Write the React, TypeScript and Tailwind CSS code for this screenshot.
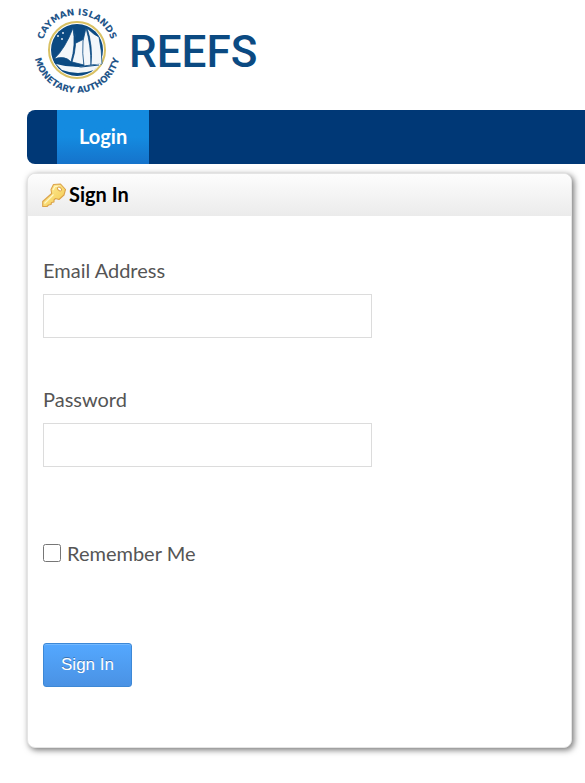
import { useState } from 'react'

function Seal() {
  return (
    <svg viewBox="0 0 92 92" className="w-[92px] h-[92px] shrink-0" role="img" aria-label="Cayman Islands Monetary Authority">
      <defs>
        <path id="seal-top" d="M10 47a36 36 0 0 1 72 0" />
        <path id="seal-bottom" d="M3 46a43 43 0 0 0 86 0" />
      </defs>
      <circle cx="46" cy="46" r="28" fill="#fff" stroke="#d9c163" strokeWidth="2" />
      <circle cx="46" cy="46" r="26" fill="#0b4a82" />
      {/* stars */}
      <g fill="#dfe9f2">
        <circle cx="32" cy="29" r="1" />
        <circle cx="27" cy="32" r="1" />
        <circle cx="31" cy="35" r="1" />
      </g>
      {/* schooner */}
      <g fill="#f3f7fa" stroke="#0b4a82" strokeWidth="0.8">
        <path d="M42 24Q34 45 23 55q11-4 17 3 5-17 2-34Z" />
        <path d="M43 24q4 16-2 34l12 3q2-14 0-26l-8 4Z" />
        <path d="M55 24l-3 13q-1 12 1 25l7-1q0-20-5-37Z" />
        <path d="M56 24q6 18 4 37l11-1q0-13-3-27-5-2-12-9Z" />
      </g>
      <path d="M25 60q20 6 46-1l-8 7q-16 6-32 0Z" fill="#f3f7fa" />
      <path d="M23 58l17 3 10 2 18-2" fill="none" stroke="#0b4a82" strokeWidth="1.200" />
      <g fill="#1f5589" fontFamily="DejaVu Sans, sans-serif" fontWeight="bold" fontSize="9" textAnchor="middle">
        <text><textPath href="#seal-top" startOffset="50%">CAYMAN ISLANDS</textPath></text>
        <text><textPath href="#seal-bottom" startOffset="50%">MONETARY AUTHORITY</textPath></text>
      </g>
    </svg>
  )
}

function KeyIcon() {
  return (
    <svg viewBox="0 0 24 24" className="w-6 h-6 shrink-0" aria-hidden="true">
      <defs>
        <linearGradient id="key-gold" x1="0" y1="0" x2="1" y2="1">
          <stop offset="0" stopColor="#fff0a0" />
          <stop offset="1" stopColor="#f3c74a" />
        </linearGradient>
      </defs>
      <path
        d="M11.500 1.500 18.500 1 23.500 6.500 22 12 17 16.500 13.500 15.500 12 17V19L9.500 19.500 9 21.500 6.500 22 5 23.500H.7V18.500L9.700 10.500 9 6.500Z"
        fill="url(#key-gold)" stroke="#dba24a" strokeWidth="1.100" strokeLinejoin="round"
      />
      <path d="m2.500 20.500 9-9M11 7l2-3.500 5-.5" fill="none" stroke="#fff7c8" strokeWidth="1.200" />
      <ellipse cx="17.500" cy="6" rx="2.300" ry="1.600" transform="rotate(40 17.500 6)" fill="#fff" stroke="#dba24a" />
    </svg>
  )
}

function Field({ id, label, type, value, onChange }: {
  id: string; label: string; type: string
  value: string; onChange: (value: string) => void
}) {
  return (
    <div>
      <label htmlFor={id} className="block text-xl leading-6">{label}</label>
      <input
        id={id} type={type} value={value} onChange={e => onChange(e.target.value)}
        className="block mt-3 w-[329px] max-w-full h-11 px-3 border border-[#dcdcdc] bg-white focus:outline-none focus:border-[#4d9ff5]"
      />
    </div>
  )
}

export default function App() {
  const [email, setEmail] = useState('')
  const [password, setPassword] = useState('')
  const [remember, setRemember] = useState(false)

  return (
    <div className="bg-white pl-[27px] pb-9 font-[Lato,sans-serif] text-[#555]">
      <header className="flex items-center pt-1 pl-1">
        <Seal />
        <span className="ml-[6px] pt-1 text-[44px] leading-none font-medium font-[Roboto,sans-serif] text-[#0b4a82]">REEFS</span>
      </header>

      <nav className="mt-[14px] flex h-[54px] rounded-l-lg bg-[#003876] pl-[30px]">
        <a href="#login" className="flex items-center bg-linear-to-b from-[#148be0] from-50% to-[#1573cb] px-[22px] pb-[3px] text-xl font-bold text-white">
          Login
        </a>
      </nav>

      <main className="mt-[9px] mr-[13px] rounded-lg border border-[#e4e4e4] bg-white shadow-[2px_2px_6px_0_rgba(0,0,0,0.55)]">
        <div className="flex h-[42px] items-center rounded-t-lg bg-linear-to-b from-[#fdfdfd] to-[#ebebeb] pl-[14px]">
          <KeyIcon />
          <h1 className="ml-[3px] pb-[3px] text-xl font-bold text-black">Sign In</h1>
        </div>

        <form onSubmit={e => e.preventDefault()} className="px-[15px] pt-[42px] pb-[60px]">
          <div className="space-y-[49px]">
            <Field id="email" label="Email Address" type="email" value={email} onChange={setEmail} />
            <Field id="password" label="Password" type="password" value={password} onChange={setPassword} />
          </div>
          <div className="mt-[72px] flex items-center gap-[6px] text-xl leading-7">
            <input
              id="remember" type="checkbox" checked={remember} onChange={e => setRemember(e.target.checked)}
              className="w-[18px] h-[18px]"
            />
            <label htmlFor="remember">Remember Me</label>
          </div>
          <button
            type="submit"
            className="mt-[76px] h-11 w-[89px] rounded-[3px] border border-[#3d88d6] bg-linear-to-b from-[#54a8ff] to-[#4a92e4] font-[Liberation_Sans,sans-serif] text-[17px] text-white shadow-[inset_0_1px_0_#74b9ff] text-shadow-[0_-1px_0_rgba(0,0,0,0.3)]"
          >
            Sign In
          </button>
        </form>
      </main>
    </div>
  )
}
